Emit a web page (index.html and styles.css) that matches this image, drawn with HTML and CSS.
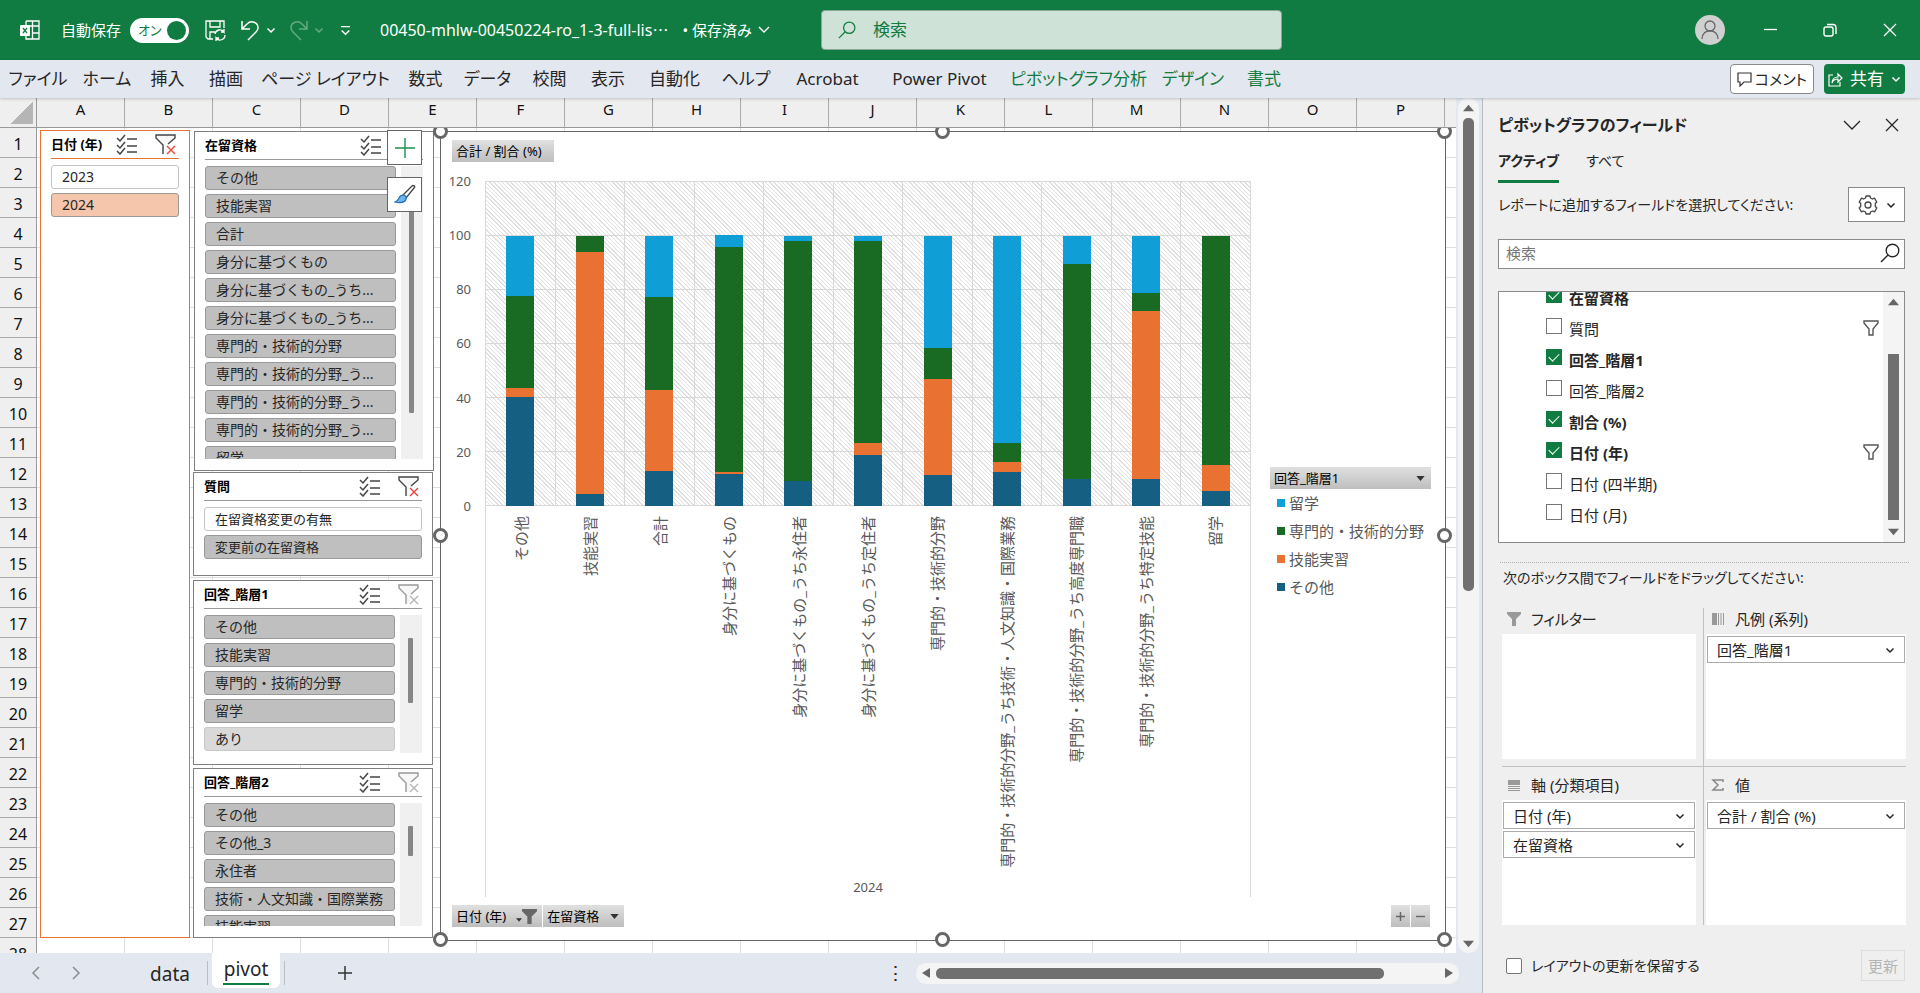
FILE: index.html
```html
<!DOCTYPE html>
<html lang="ja">
<head>
  <meta charset="UTF-8" />
  <meta name="viewport" content="width=device-width, initial-scale=1" />
  <title>00450-mhlw-00450224-ro_1-3-full-list - Excel</title>
  <link rel="stylesheet" href="styles.css">
</head>
<body>

  <svg class="sprite" aria-hidden="true">
    <symbol id="i-chev" viewBox="0 0 10 10"><path d="M1.500 3.500 5 7l3.500-3.500" fill="none" stroke="currentColor" stroke-width="1.500"/></symbol>
    <symbol id="i-chevwide" viewBox="0 0 18 18"><path d="M1 5l8 8 8-8" fill="none" stroke="currentColor" stroke-width="1.300"/></symbol>
    <symbol id="i-close" viewBox="0 0 14 14"><path d="M1 1l12 12M13 1 1 13" fill="none" stroke="currentColor" stroke-width="1.300"/></symbol>
    <symbol id="i-search" viewBox="0 0 20 20"><path d="M8 12 1 19" fill="none" stroke="currentColor" stroke-width="1.400"/><circle cx="12.500" cy="7.500" r="6.300" fill="none" stroke="currentColor" stroke-width="1.400"/></symbol>
    <symbol id="i-multi" viewBox="0 0 21 21"><path d="M1 4l3 3 5-6M1 11l3 3 5-6M1 17l3 3 5-6M11 5h10M11 12h10M11 18h10" fill="none" stroke="#444" stroke-width="1.500"/></symbol>
    <symbol id="i-clear" viewBox="0 0 21 21"><path d="M1 1h19v3l-8 7v9H8v-9L1 4z" fill="#f7f7f7" stroke="none"/><path d="M8 20v-9L1 4V1h19v3l-7 6" fill="none" stroke="currentColor" stroke-width="1.400"/><path d="M12 12l8 8M20 12l-8 8" stroke="var(--x, #e8443c)" stroke-width="1.400"/></symbol>
    <symbol id="i-funnel" viewBox="0 0 16 16"><path d="M1 1h14v2L10 9v6H6V9L1 3z" fill="none" stroke="#555" stroke-width="1.400"/></symbol>
    <symbol id="i-funnelfill" viewBox="0 0 14 14"><path d="M0 0h14v2L9 7v7H5V7L0 2z" fill="currentColor"/></symbol>
    <symbol id="i-tri" viewBox="0 0 10 6"><path d="M0 0h10L5 6z" fill="currentColor"/></symbol>
  </svg>

  <header class="titlebar">
    <svg class="app-icon" viewBox="0 0 20 20"><path d="M6 1h13v18H6V15M6 5V1M12.500 1v18M6 6h13M12 13h7" fill="none" stroke="#fff" stroke-width="1.300"/><rect x="0" y="5" width="10" height="11" rx="1" fill="#fff"/><path d="M3 8l4 5M7 8l-4 5" stroke="#107c41" stroke-width="1.300"/></svg>
    <span class="autosave" id="autosave">自動保存</span>
    <button class="toggle" aria-labelledby="autosave">オン<span class="knob"></span></button>
    <button class="tool save" aria-label="保存"><svg viewBox="0 0 21 21"><path d="M8 19H3L1 17V1h18v7M5 1v6h10V1M5 19v-7h5" fill="none" stroke="#fff" stroke-width="1.300"/><path d="M10 14a5 5 0 0 1 9-2v-3M19 12h-3M20 15a5 5 0 0 1-9 3v3M11 18h3" fill="none" stroke="#fff" stroke-width="1.300"/></svg></button>
    <button class="tool undo" aria-label="元に戻す"><svg viewBox="0 0 21 21"><path d="M2 1v8h8M2 9l5-5c4-4 11-2 11 4 0 2-1 3-2 4l-8 8" fill="none" stroke="#fff" stroke-width="1.500"/></svg><svg class="mini"><use href="#i-chev"/></svg></button>
    <button class="tool redo" aria-label="やり直し" disabled><svg viewBox="0 0 21 21"><path d="M19 1v8h-8M19 9l-5-5C10 0 3 2 3 8c0 2 1 3 2 4l8 8" fill="none" stroke="#fff" stroke-width="1.500"/></svg><svg class="mini"><use href="#i-chev"/></svg></button>
    <button class="tool more" aria-label="クイック アクセスのカスタマイズ"><svg viewBox="0 0 10 10"><path d="M1 1.500h8M1.500 5 5 8.500 8.500 5" fill="none" stroke="#fff" stroke-width="1.300"/></svg></button>
    <button class="doc">00450-mhlw-00450224-ro_1-3-full-lis⋯<span class="state">• 保存済み</span><svg viewBox="0 0 12 12"><path d="M1 3l5 5 5-5" fill="none" stroke="#fff" stroke-width="1.400"/></svg></button>
    <label class="search"><svg><use href="#i-search"/></svg><input type="text" aria-label="検索" placeholder="検索"></label>
    <div class="win">
      <button class="avatar" aria-label="アカウント"><svg viewBox="0 0 30 30"><circle cx="15" cy="15" r="15" fill="#d0d0d0"/><circle cx="15" cy="11" r="5" fill="none" stroke="#666" stroke-width="1.300"/><path d="M7 24c0-11 16-11 16 0" fill="none" stroke="#666" stroke-width="1.300"/></svg></button>
      <button aria-label="最小化"><svg viewBox="0 0 14 14"><path d="M1 6.500h13" stroke="#fff" stroke-width="1.300"/></svg></button>
      <button aria-label="元に戻す (縮小)"><svg viewBox="0 0 14 14"><rect x="1" y="4" width="9" height="9" rx="2" fill="none" stroke="#fff" stroke-width="1.400"/><path d="M4 1.500h6a3 3 0 0 1 3 3V11" fill="none" stroke="#fff" stroke-width="1.400"/></svg></button>
      <button aria-label="閉じる"><svg><use href="#i-close"/></svg></button>
    </div>
  </header>

  <div class="ribbon">
    <nav class="ribbon-tabs">
      <a href="#">ファイル</a>
      <a href="#">ホーム</a>
      <a href="#">挿入</a>
      <a href="#">描画</a>
      <a href="#">ページ レイアウト</a>
      <a href="#">数式</a>
      <a href="#">データ</a>
      <a href="#">校閲</a>
      <a href="#">表示</a>
      <a href="#">自動化</a>
      <a href="#">ヘルプ</a>
      <a href="#">Acrobat</a>
      <a href="#">Power Pivot</a>
      <a href="#" class="ctx">ピボットグラフ分析</a>
      <a href="#" class="ctx">デザイン</a>
      <a href="#" class="ctx">書式</a>
    </nav>
    <button class="btn-comment"><svg viewBox="0 0 15 15"><path d="M1 1h13v9H7l-4 4v-4H1z" fill="none" stroke="#333" stroke-width="1.200"/></svg>コメント</button>
    <button class="btn-share"><svg viewBox="0 0 15 15"><path d="M5 3H1v11h11v-4M4 11c0-4 3-6 6-6V2l4 4-4 4V7c-3 0-5 1-6 4z" fill="none" stroke="#fff" stroke-width="1.200"/></svg>共有<svg class="mini"><use href="#i-chev"/></svg></button>
  </div>

  <main class="workspace">
    <section class="book">
      <div class="sheet">
        <div class="corner"></div>
        <div class="cols"><span>A</span><span>B</span><span>C</span><span>D</span><span>E</span><span>F</span><span>G</span><span>H</span><span>I</span><span>J</span><span>K</span><span>L</span><span>M</span><span>N</span><span>O</span><span>P</span></div>
        <div class="rows"><span>1</span><span>2</span><span>3</span><span>4</span><span>5</span><span>6</span><span>7</span><span>8</span><span>9</span><span>10</span><span>11</span><span>12</span><span>13</span><span>14</span><span>15</span><span>16</span><span>17</span><span>18</span><span>19</span><span>20</span><span>21</span><span>22</span><span>23</span><span>24</span><span>25</span><span>26</span><span>27</span><span>28</span></div>

        <div class="cells">
          <!-- スライサー -->
          <div class="slicer s-date">
            <div class="slicer-head"><h3>日付 (年)</h3><svg><use href="#i-multi"/></svg><svg><use href="#i-clear"/></svg></div>
            <div class="slicer-body">
              <div class="items">
                <button class="off">2023</button>
                <button class="on">2024</button>
              </div>
            </div>
          </div>

          <div class="slicer s-status">
            <div class="slicer-head"><h3>在留資格</h3><svg><use href="#i-multi"/></svg><svg><use href="#i-clear"/></svg></div>
            <div class="slicer-body">
              <div class="items">
                <button>その他</button>
                <button>技能実習</button>
                <button>合計</button>
                <button>身分に基づくもの</button>
                <button>身分に基づくもの_うち...</button>
                <button>身分に基づくもの_うち...</button>
                <button>専門的・技術的分野</button>
                <button>専門的・技術的分野_う...</button>
                <button>専門的・技術的分野_う...</button>
                <button>専門的・技術的分野_う...</button>
                <button>留学</button>
              </div>
              <div class="track"><i></i></div>
            </div>
          </div>

          <div class="slicer s-question">
            <div class="slicer-head"><h3>質問</h3><svg><use href="#i-multi"/></svg><svg><use href="#i-clear"/></svg></div>
            <div class="slicer-body">
              <div class="items small">
                <button class="off">在留資格変更の有無</button>
                <button>変更前の在留資格</button>
              </div>
            </div>
          </div>

          <div class="slicer s-level1">
            <div class="slicer-head"><h3>回答_階層1</h3><svg><use href="#i-multi"/></svg><svg class="dim"><use href="#i-clear"/></svg></div>
            <div class="slicer-body">
              <div class="items">
                <button>その他</button>
                <button>技能実習</button>
                <button>専門的・技術的分野</button>
                <button>留学</button>
                <button class="nodata">あり</button>
              </div>
              <div class="track"><i></i></div>
            </div>
          </div>

          <div class="slicer s-level2">
            <div class="slicer-head"><h3>回答_階層2</h3><svg><use href="#i-multi"/></svg><svg class="dim"><use href="#i-clear"/></svg></div>
            <div class="slicer-body">
              <div class="items">
                <button>その他</button>
                <button>その他_3</button>
                <button>永住者</button>
                <button>技術・人文知識・国際業務</button>
                <button>技能実習</button>
              </div>
              <div class="track"><i></i></div>
            </div>
          </div>

          <!-- ピボットグラフ -->
          <div class="chart">
            <div class="chart-top"><button class="fbtn">合計 / 割合 (%)</button></div>
            <div class="yaxis"><span>120</span><span>100</span><span>80</span><span>60</span><span>40</span><span>20</span><span>0</span></div>
            <div class="plot">
              <div class="bar"><i class="b1" style="height:33.8%"></i><i class="b2" style="height:2.6%"></i><i class="b3" style="height:28.3%"></i><i class="b4" style="height:18.6%"></i></div>
              <div class="bar"><i class="b1" style="height:3.8%"></i><i class="b2" style="height:74.5%"></i><i class="b3" style="height:5%"></i></div>
              <div class="bar"><i class="b1" style="height:10.8%"></i><i class="b2" style="height:25%"></i><i class="b3" style="height:28.6%"></i><i class="b4" style="height:18.9%"></i></div>
              <div class="bar"><i class="b1" style="height:10%"></i><i class="b2" style="height:0.6%"></i><i class="b3" style="height:69.2%"></i><i class="b4" style="height:3.7%"></i></div>
              <div class="bar"><i class="b1" style="height:7.8%"></i><i class="b3" style="height:74.1%"></i><i class="b4" style="height:1.4%"></i></div>
              <div class="bar"><i class="b1" style="height:15.8%"></i><i class="b2" style="height:3.7%"></i><i class="b3" style="height:62.4%"></i><i class="b4" style="height:1.4%"></i></div>
              <div class="bar"><i class="b1" style="height:9.7%"></i><i class="b2" style="height:29.5%"></i><i class="b3" style="height:9.6%"></i><i class="b4" style="height:34.5%"></i></div>
              <div class="bar"><i class="b1" style="height:10.6%"></i><i class="b2" style="height:3.1%"></i><i class="b3" style="height:5.8%"></i><i class="b4" style="height:63.8%"></i></div>
              <div class="bar"><i class="b1" style="height:8.4%"></i><i class="b3" style="height:66.2%"></i><i class="b4" style="height:8.7%"></i></div>
              <div class="bar"><i class="b1" style="height:8.4%"></i><i class="b2" style="height:51.7%"></i><i class="b3" style="height:5.8%"></i><i class="b4" style="height:17.6%"></i></div>
              <div class="bar"><i class="b1" style="height:4.7%"></i><i class="b2" style="height:8%"></i><i class="b3" style="height:70.6%"></i></div>
            </div>
            <div class="legend">
              <button class="fbtn">回答_階層1<svg class="tri"><use href="#i-tri"/></svg></button>
              <ul>
                <li><i class="b4"></i>留学</li>
                <li><i class="b3"></i>専門的・技術的分野</li>
                <li><i class="b2"></i>技能実習</li>
                <li><i class="b1"></i>その他</li>
              </ul>
            </div>
            <div class="xaxis">
              <div class="cats">
                <div><span>その他</span></div>
                <div><span>技能実習</span></div>
                <div><span>合計</span></div>
                <div><span>身分に基づくもの</span></div>
                <div><span>身分に基づくもの_うち永住者</span></div>
                <div><span>身分に基づくもの_うち定住者</span></div>
                <div><span>専門的・技術的分野</span></div>
                <div><span>専門的・技術的分野_うち技術・人文知識・国際業務</span></div>
                <div><span>専門的・技術的分野_うち高度専門職</span></div>
                <div><span>専門的・技術的分野_うち特定技能</span></div>
                <div><span>留学</span></div>
              </div>
              <div class="year">2024</div>
            </div>
            <div class="chart-foot">
              <button class="fbtn filtered">日付 (年)<svg class="tri"><use href="#i-tri"/></svg><svg class="fn"><use href="#i-funnelfill"/></svg></button>
              <button class="fbtn">在留資格<svg class="tri"><use href="#i-tri"/></svg></button>
              <span class="grow"></span>
              <button class="fbtn sq" aria-label="フィールド全体の展開"><svg viewBox="0 0 10 10"><path d="M5 0v10M0 5h10" stroke="#666" stroke-width="1.600"/></svg></button>
              <button class="fbtn sq" aria-label="フィールド全体の折りたたみ"><svg viewBox="0 0 10 10"><path d="M0 5h10" stroke="#666" stroke-width="1.600"/></svg></button>
            </div>
            <b class="h tl"></b><b class="h tc"></b><b class="h tr"></b><b class="h ml"></b><b class="h mr"></b><b class="h bl"></b><b class="h bc"></b><b class="h br"></b>
          </div>

          <div class="chart-tools">
            <button aria-label="グラフ要素"><svg viewBox="0 0 22 22"><path d="M11 1v20M1 11h20" stroke="#1d9150" stroke-width="1.400"/></svg></button>
            <button aria-label="グラフ スタイル"><svg viewBox="0 0 22 22"><path d="M9 11 18 2c1-1 4 0 2 2l-8 10z" fill="#fff" stroke="#444" stroke-width="1.300"/><path d="M9 11c2 0 4 2 3 4-1 4-6 4-11 3 3-1 3-2 4-4s2-3 4-3z" fill="#6cb4ea" stroke="#1c6fb8" stroke-width="1.200"/></svg></button>
          </div>
        </div>
      </div>

      <div class="vscroll"><svg class="up"><use href="#i-tri"/></svg><i></i><svg><use href="#i-tri"/></svg></div>

      <footer class="sheetbar">
        <button class="nav" aria-label="前のシート"><svg viewBox="0 0 10 14"><path d="M8 1 2 7l6 6" fill="none" stroke="#8a8d93" stroke-width="1.500"/></svg></button>
        <button class="nav" aria-label="次のシート"><svg viewBox="0 0 10 14"><path d="M2 1l6 6-6 6" fill="none" stroke="#8a8d93" stroke-width="1.500"/></svg></button>
        <a href="#" class="stab">data</a>
        <a href="#" class="stab active">pivot</a>
        <button class="add" aria-label="新しいシート"><svg viewBox="0 0 16 16"><path d="M8 1v14M1 8h14" stroke="#333" stroke-width="1.500"/></svg></button>
        <span class="grow"></span>
        <span class="dots">⋮</span>
        <div class="hscroll"><svg class="left" viewBox="0 0 8 10"><path d="M8 0v10L0 5z" fill="#666"/></svg><i></i><svg viewBox="0 0 8 10"><path d="M0 0v10l8-5z" fill="#666"/></svg></div>
      </footer>
    </section>

    <aside class="pane">
      <div class="pane-title">
        <h2>ピボットグラフのフィールド</h2>
        <button aria-label="作業ウィンドウ オプション"><svg class="wide"><use href="#i-chevwide"/></svg></button>
        <button aria-label="閉じる"><svg><use href="#i-close"/></svg></button>
      </div>
      <div class="pane-tabs"><a href="#" class="active">アクティブ</a><a href="#">すべて</a></div>
      <div class="pane-choose">
        <p>レポートに追加するフィールドを選択してください:</p>
        <button aria-label="ツール"><svg class="gear" viewBox="0 0 20 20"><path d="M7.500 3 8 1h4l.500 2 2 1 2-.800 2.300 3.800-1.500 1.500v3l1.500 1.500-2.300 3.800-2-.800-2 1L12 19H8l-.500-2-2-1-2 .800L1.200 13l1.500-1.500v-3L1.200 7l2.300-3.800 2 .800z" fill="none" stroke="#444" stroke-width="1.300" stroke-linejoin="round"/><circle cx="10" cy="10" r="3" fill="none" stroke="#444" stroke-width="1.300"/></svg><svg class="mini"><use href="#i-chev"/></svg></button>
      </div>
      <label class="pane-search"><input type="text" aria-label="フィールドの検索" placeholder="検索"><svg><use href="#i-search"/></svg></label>

      <div class="fields">
        <div class="field-list">
          <label><input type="checkbox" checked><span>在留資格</span></label>
          <label><input type="checkbox"><span>質問</span><svg><use href="#i-funnel"/></svg></label>
          <label><input type="checkbox" checked><span>回答_階層1</span></label>
          <label><input type="checkbox"><span>回答_階層2</span></label>
          <label><input type="checkbox" checked><span>割合 (%)</span></label>
          <label><input type="checkbox" checked><span>日付 (年)</span><svg><use href="#i-funnel"/></svg></label>
          <label><input type="checkbox"><span>日付 (四半期)</span></label>
          <label><input type="checkbox"><span>日付 (月)</span></label>
        </div>
        <div class="fscroll"><svg class="up"><use href="#i-tri"/></svg><i></i><svg><use href="#i-tri"/></svg></div>
      </div>

      <p class="drag">次のボックス間でフィールドをドラッグしてください:</p>
      <div class="zones">
        <div class="zone">
          <h4><svg viewBox="0 0 14 14" color="#999"><use href="#i-funnelfill"/></svg>フィルター</h4>
          <div class="box"></div>
        </div>
        <div class="zone right">
          <h4><svg viewBox="0 0 14 14"><path d="M1 1h5v12H1z" fill="#999"/><path d="M7.500 1v12M10 1v12M12.500 1v12" stroke="#999"/></svg>凡例 (系列)</h4>
          <div class="box"><button>回答_階層1<svg><use href="#i-chev"/></svg></button></div>
        </div>
        <div class="zone">
          <h4><svg viewBox="0 0 14 14"><path d="M1 2h12v5H1z" fill="#999"/><path d="M1 8.500h12M1 10.500h12M1 12.500h12" stroke="#999"/></svg>軸 (分類項目)</h4>
          <div class="box"><button>日付 (年)<svg><use href="#i-chev"/></svg></button><button>在留資格<svg><use href="#i-chev"/></svg></button></div>
        </div>
        <div class="zone right">
          <h4><svg viewBox="0 0 14 14"><path d="M12 4V2H2l5 5-5 5h10v-2" fill="none" stroke="#888" stroke-width="1.500"/></svg>値</h4>
          <div class="box"><button>合計 / 割合 (%)<svg><use href="#i-chev"/></svg></button></div>
        </div>
      </div>
      <div class="defer">
        <label><input type="checkbox"><span>レイアウトの更新を保留する</span></label>
        <button disabled>更新</button>
      </div>
    </aside>
  </main>

</body>
</html>
```

FILE: styles.css
```css
* {
  box-sizing: border-box;
}
body {
  margin: 0;
  height: 100vh;
  display: flex;
  flex-direction: column;
  overflow: hidden;
  font-family: "Noto Sans", "Noto Sans CJK JP", sans-serif;
  font-size: 15px;
  line-height: 20px;
  color: #262626;
  background: #e3e7ef;
}
button, input {
  font: inherit;
  color: inherit;
  margin: 0;
}
button {
  padding: 0;
  border: none;
  background: none;
}
a {
  color: inherit;
  text-decoration: none;
}
h2, h3, h4, p, ul {
  margin: 0;
  padding: 0;
}
svg {
  display: block;
  flex: none;
}
.sprite {
  position: absolute;
  width: 0;
  height: 0;
}
.mini {
  width: 10px;
  height: 10px;
}
.grow {
  flex: 1;
}

/* タイトル バー */
.titlebar {
  flex: none;
  display: flex;
  align-items: center;
  height: 60px;
  padding-left: 20px;
  background: #107c41;
  color: #fff;
}
.app-icon {
  width: 20px;
  height: 20px;
}
.autosave {
  margin-left: 21px;
}
.toggle {
  display: flex;
  align-items: center;
  justify-content: space-between;
  width: 59px;
  height: 25px;
  margin: 0 16px 0 9px;
  padding: 0 3px 0 8px;
  border-radius: 13px;
  background: #fff;
  color: #107c41;
  font-size: 13px;
  font-feature-settings: "palt";
}
.knob {
  width: 19px;
  height: 19px;
  border-radius: 50%;
  background: #107c41;
}
.tool {
  display: flex;
  align-items: center;
  gap: 5px;
}
.tool svg:first-child {
  width: 21px;
  height: 21px;
}
.tool.undo {
  margin-left: 14px;
}
.tool.redo {
  margin-left: 12px;
  color: #fff;
  opacity: 0.35;
}
.tool.more {
  margin-left: 16px;
}
.tool.more svg {
  width: 11px;
  height: 11px;
}
.doc {
  display: flex;
  align-items: center;
  margin-left: 29px;
  font-size: 16px;
  white-space: nowrap;
}
.doc .state {
  margin: 0 6px 0 14px;
  font-size: 15px;
}
.doc svg {
  width: 12px;
  height: 12px;
}
.search {
  position: absolute;
  left: 50%;
  display: flex;
  align-items: center;
  gap: 15px;
  width: 24%;
  height: 40px;
  margin-left: -139px;
  padding-left: 16px;
  border: 1px solid #86a894;
  border-radius: 4px;
  background: #cee2d7;
  color: #107c41;
}
.search svg {
  width: 18px;
  height: 18px;
}
.search input {
  flex: 1;
  min-width: 0;
  border: none;
  background: none;
  font-size: 17px;
  outline: none;
}
.search input::placeholder {
  color: #107c41;
}
.win {
  display: flex;
  margin-left: auto;
}
.win button {
  display: flex;
  justify-content: center;
  align-items: center;
  width: 60px;
  height: 60px;
}
.win svg {
  width: 14px;
  height: 14px;
}
.win .avatar svg {
  width: 30px;
  height: 30px;
}

/* リボン */
.ribbon {
  position: relative;
  z-index: 5;
  flex: none;
  display: flex;
  align-items: center;
  height: 38px;
  padding-right: 15px;
  background: #e3e7ef;
  box-shadow: 0 1px 3px rgba(0, 0, 0, 0.2);
  font-size: 17px;
  font-feature-settings: "palt";
}
.ribbon-tabs {
  display: grid;
  grid-template-columns: 76px 62px 59px 58px 141px 59px 65px 59px 58px 75px 68px 95px 129px 149px 80px 62px;
  margin-right: auto;
  text-align: center;
  white-space: nowrap;
}
.ribbon-tabs .ctx {
  color: #107c41;
}
.btn-comment, .btn-share {
  display: flex;
  align-items: center;
  justify-content: center;
  gap: 3px;
  height: 30px;
  border-radius: 4px;
  white-space: nowrap;
}
.btn-comment {
  width: 84px;
  margin-right: 10px;
  border: 1px solid #8a8a8a;
  background: #fff;
  font-size: 15px;
}
.btn-share {
  width: 81px;
  gap: 7px;
  background: #107c41;
  color: #fff;
}
.btn-comment svg, .btn-share svg:first-child {
  width: 15px;
  height: 15px;
}

/* ブック */
.workspace {
  flex: 1;
  min-height: 0;
  display: grid;
  grid-template-columns: 1fr 437px;
}
.book {
  min-width: 0;
  min-height: 0;
  display: grid;
  grid-template-columns: 1fr 26px;
  grid-template-rows: minmax(0, 1fr) 40px;
  border-right: 1px solid #b9bdc4;
}
.sheet {
  min-width: 0;
  display: grid;
  grid-template-columns: 37px 1fr;
  grid-template-rows: 30px 1fr;
  overflow: hidden;
  background: #fff;
}
.corner {
  border-right: 1px solid #999;
  border-bottom: 1px solid #999;
  background: linear-gradient(135deg, transparent 50%, #b5b5b5 50%) 11px 4px / 22px 22px no-repeat #efefef;
}
.cols, .rows {
  display: flex;
  overflow: hidden;
  background: #efefef;
  color: #111;
}
.cols {
  border-bottom: 1px solid #999;
}
.cols span {
  flex: none;
  width: 88px;
  border-right: 1px solid #ababab;
  line-height: 22px;
  text-align: center;
}
.rows {
  flex-direction: column;
  border-right: 1px solid #999;
  font-size: 16px;
}
.rows span {
  flex: none;
  height: 30px;
  border-bottom: 1px solid #ababab;
  line-height: 32px;
  text-align: center;
}
.cells {
  position: relative;
  overflow: hidden;
  background-image: linear-gradient(to left, #dedede 1px, transparent 1px), linear-gradient(to top, #dedede 1px, transparent 1px);
  background-size: 88px 30px;
}

/* スライサー */
.slicer {
  position: absolute;
  left: 156px;
  width: 240px;
  display: flex;
  flex-direction: column;
  padding: 0 10px 11px;
  border: 1px solid #808080;
  background: #fff;
}
.s-date {
  left: 3px;
  top: 2px;
  width: 150px;
  height: 808px;
  border-color: #e97132;
}
.s-status {
  left: 157px;
  top: 3px;
  height: 340px;
}
.s-question {
  top: 344px;
  height: 104px;
}
.s-level1 {
  top: 452px;
  height: 185px;
}
.s-level2 {
  top: 640px;
  height: 170px;
}
.slicer-head {
  flex: none;
  display: flex;
  align-items: center;
  height: 28px;
  padding-right: 3px;
  border-bottom: 1px solid #999;
}
.s-date .slicer-head {
  border-color: #e97132;
}
.slicer-head h3 {
  flex: 1;
  padding-bottom: 2px;
  font-size: 13px;
  color: #000;
  white-space: nowrap;
}
.slicer-head svg {
  width: 21px;
  height: 21px;
  color: #444;
}
.slicer-head svg:last-child {
  margin-left: 18px;
}
.slicer-head .dim {
  --x: #b5b5b5;
  color: #999;
}
.slicer-body {
  flex: 1;
  min-height: 0;
  display: flex;
  gap: 5px;
  margin-top: 6px;
}
.items {
  flex: 1;
  display: flex;
  flex-direction: column;
  gap: 4px;
  overflow: hidden;
}
.items button {
  flex: none;
  height: 24px;
  padding: 0 10px;
  border: 1px solid #999;
  border-radius: 3px;
  background: #bfbfbf;
  font-size: 14px;
  line-height: 20px;
  text-align: left;
  white-space: nowrap;
}
.items.small button {
  font-size: 13px;
}
.items .off {
  border-color: #c4c4c4;
  background: #fff;
}
.items .on {
  background: #f6c6ac;
}
.items .nodata {
  border-color: #c8c8c8;
  background: #d9d9d9;
}
.track {
  flex: none;
  width: 22px;
  padding-left: 8px;
  background: #f0f0f0;
}
.track i {
  display: block;
  width: 5px;
  border-radius: 1px;
  background: #868686;
}
.s-status .track i {
  height: 218px;
  margin-top: 29px;
}
.s-level1 .track i {
  height: 65px;
  margin-top: 23px;
}
.s-level2 .track i {
  height: 30px;
  margin-top: 23px;
}

/* グラフ */
.chart {
  position: absolute;
  left: 403px;
  top: 3px;
  width: 1006px;
  height: 810px;
  display: grid;
  grid-template-columns: 44px 1fr 194px;
  grid-template-rows: 49px 325px 391px 1fr;
  border: 1px solid #666;
  background: #fff;
  color: #595959;
}
.chart-top, .chart-foot {
  grid-column: 1 / -1;
  display: flex;
  align-items: flex-start;
  gap: 1px;
  padding: 8px 15px 0 11px;
}
.fbtn {
  display: flex;
  align-items: center;
  height: 22px;
  padding: 0 5px 0 4px;
  background: linear-gradient(#e0e0e0, #bebebe);
  color: #000;
  font-size: 13px;
  white-space: nowrap;
}
.chart-top .fbtn {
  padding-right: 12px;
}
.tri {
  width: 9px;
  height: 5px;
  margin-left: 11px;
  color: #333;
}
.filtered .tri {
  width: 6px;
  height: 4px;
  margin: 8px 0 0 10px;
}
.fn {
  width: 15px;
  height: 15px;
  color: #666;
}
.sq {
  justify-content: center;
  width: 19px;
  padding: 0;
}
.sq svg {
  width: 9px;
  height: 9px;
}
.yaxis {
  display: flex;
  flex-direction: column;
  justify-content: space-between;
  margin: -10px 14px -10px 0;
  font-size: 13px;
  text-align: right;
}
.plot {
  display: grid;
  grid-template-columns: repeat(11, 1fr);
  border-left: 1px solid #d9d9d9;
  border-top: 1px solid #d9d9d9;
  background:
    linear-gradient(to top, #d9d9d9 1px, transparent 1px) 0 0 / 100% calc(100% / 6),
    repeating-linear-gradient(45deg, #e0e0e0 0 1px, #fff 1px 3px);
}
.bar {
  display: flex;
  flex-direction: column-reverse;
  border-right: 1px solid #d9d9d9;
}
.bar i {
  width: 28px;
  margin: 0 auto;
}
.b1 {
  background: #156082;
}
.b2 {
  background: #e97132;
}
.b3 {
  background: #196b24;
}
.b4 {
  background: #0f9ed5;
}
.legend {
  grid-row: 2 / 4;
  grid-column: 3;
  margin: 286px 14px 0 19px;
}
.legend .fbtn {
  width: 100%;
}
.legend .tri {
  margin: 0 1px 0 auto;
}
.legend ul {
  list-style: none;
}
.legend li {
  display: flex;
  align-items: center;
  gap: 4px;
  height: 28px;
  padding-left: 7px;
  white-space: nowrap;
}
.legend li i {
  width: 8px;
  height: 8px;
}
.xaxis {
  grid-column: 2;
  display: flex;
  flex-direction: column;
  justify-content: space-between;
  border: solid #d9d9d9;
  border-width: 0 1px;
}
.cats {
  display: grid;
  grid-template-columns: repeat(11, 1fr);
  padding-top: 10px;
}
.cats div {
  display: flex;
  justify-content: center;
  align-items: flex-start;
}
.cats span {
  writing-mode: vertical-rl;
  text-orientation: sideways;
  transform: rotate(180deg);
  white-space: nowrap;
}
.year {
  font-size: 13px;
  text-align: center;
}
.h {
  position: absolute;
  width: 15px;
  height: 15px;
  margin: -8px;
  border: 3px solid #666;
  border-radius: 50%;
  background: #fff;
}
.tl, .tc, .tr {
  top: 0;
}
.bl, .bc, .br {
  top: 100%;
}
.ml, .mr {
  top: 50%;
}
.tl, .ml, .bl {
  left: 0;
}
.tc, .bc {
  left: 50%;
}
.tr, .mr, .br {
  left: 100%;
}
.chart-tools {
  position: absolute;
  left: 350px;
  top: 2px;
  display: flex;
  flex-direction: column;
  gap: 12px;
}
.chart-tools button {
  display: flex;
  align-items: center;
  justify-content: center;
  width: 35px;
  height: 35px;
  border: 1px solid #666;
  background: #fff;
}
.chart-tools svg {
  width: 22px;
  height: 22px;
}

/* スクロール バーとシート見出し */
.vscroll {
  display: flex;
  flex-direction: column;
  align-items: center;
  gap: 6px;
  margin: 0 3px 0 2px;
  padding: 6px 0 5px;
  border-radius: 10px;
  background: #f4f4f4;
  color: #666;
}
.vscroll svg, .fscroll svg {
  width: 11px;
  height: 8px;
}
.up {
  transform: rotate(180deg);
}
.vscroll i {
  width: 11px;
  height: 56%;
  margin-bottom: auto;
  border-radius: 5px;
  background: #707070;
}
.sheetbar {
  grid-column: 1 / -1;
  display: flex;
  align-items: center;
  padding: 0 23px 0 31px;
  font-size: 19px;
}
.nav {
  width: 10px;
  margin-right: 30px;
}
.nav svg {
  width: 10px;
  height: 14px;
}
.stab {
  width: 95px;
  padding: 0;
  line-height: 38px;
  text-align: center;
}
.stab:not(.active) {
  height: 24px;
  margin: 0 4px 0 2px;
  border-right: 1px solid #b9bdc4;
  padding-left: 20px;
  line-height: 26px;
}
.stab.active {
  align-self: flex-start;
  width: 68px;
  height: 35px;
  border-radius: 0 0 6px 6px;
  background: linear-gradient(#107c41, #107c41) 50% 30px / 46px 2px no-repeat #fff;
  line-height: 32px;
}
.add {
  height: 24px;
  margin-left: 4px;
  padding-left: 52px;
  border-left: 1px solid #b9bdc4;
}
.add svg {
  width: 16px;
  height: 16px;
}
.dots {
  width: 30px;
}
.hscroll {
  display: flex;
  align-items: center;
  gap: 6px;
  width: 38%;
  height: 21px;
  padding: 0 6px;
  border-radius: 10px;
  background: #f4f4f4;
}
.hscroll svg {
  width: 8px;
  height: 10px;
}
.hscroll i {
  width: 448px;
  height: 11px;
  margin-right: auto;
  border-radius: 5px;
  background: #707070;
}

/* フィールド リスト */
.pane {
  min-width: 0;
  display: flex;
  flex-direction: column;
  padding: 12px 15px 0;
  background: #efefef;
  font-feature-settings: "palt";
}
.pane-title {
  display: flex;
  align-items: center;
  gap: 24px;
  height: 30px;
  padding-right: 6px;
}
.pane-title h2 {
  flex: 1;
  font-size: 16px;
}
.pane-title svg {
  width: 14px;
  height: 14px;
}
.pane-title .wide {
  width: 18px;
  height: 18px;
}
.pane-tabs {
  display: flex;
  gap: 27px;
  margin-top: 8px;
  font-size: 14px;
}
.pane-tabs a {
  padding: 3px 0 0;
  line-height: 20px;
}
.pane-tabs .active {
  height: 35px;
  border-bottom: 3px solid #107c41;
  font-weight: bold;
}
.pane-choose {
  display: flex;
  align-items: center;
  justify-content: space-between;
  margin-top: 4px;
  font-size: 14px;
}
.pane-choose button {
  display: flex;
  align-items: center;
  justify-content: center;
  gap: 8px;
  width: 57px;
  height: 35px;
  border: 1px solid #8a8a8a;
  background: #fff;
}
.gear {
  width: 20px;
  height: 20px;
}
.pane-search {
  display: flex;
  align-items: center;
  height: 30px;
  margin-top: 17px;
  padding: 0 4px 2px 7px;
  border: 1px solid #8a8a8a;
  background: #fff;
}
.pane-search input {
  flex: 1;
  min-width: 0;
  border: none;
  padding: 0;
  outline: none;
}
.pane-search svg {
  width: 20px;
  height: 20px;
}
.pane-search input::placeholder {
  color: #767676;
}
.fields {
  display: flex;
  height: 252px;
  margin-top: 22px;
  border: 1px solid #8a8a8a;
  background: #fff;
}
.field-list {
  flex: 1;
  display: flex;
  flex-direction: column;
  justify-content: flex-end;
  overflow: hidden;
  padding: 0 4px 7px 47px;
}
.field-list label {
  flex: none;
  display: flex;
  align-items: flex-start;
  height: 31px;
}
.field-list span {
  flex: 1;
  padding-left: 7px;
  line-height: 22px;
}
.field-list :checked + span {
  font-weight: bold;
}
.field-list svg {
  width: 16px;
  height: 16px;
  margin-top: 2px;
}
input[type="checkbox"] {
  appearance: none;
  flex: none;
  width: 16px;
  height: 16px;
  border: 1px solid #767676;
  background: #fff;
}
input[type="checkbox"]:checked {
  border-color: #107c41;
  background: #107c41;
}
input[type="checkbox"]:checked::after {
  content: "";
  display: block;
  width: 9px;
  height: 5px;
  margin: 3px 2px;
  border: solid #fff;
  border-width: 0 0 1px 1px;
  transform: rotate(-45deg);
}
.fscroll {
  display: flex;
  flex-direction: column;
  align-items: center;
  justify-content: space-between;
  width: 21px;
  padding: 6px 0;
  background: #f4f4f4;
  color: #666;
}
.fscroll i {
  width: 11px;
  height: 166px;
  margin: auto 0 8px;
  background: #707070;
}
.drag {
  margin: 19px -4px 0 2px;
  padding: 5px 3px 0;
  border-top: 1px dotted #b0b0b0;
  font-size: 14px;
}
.zones {
  display: grid;
  grid-template-columns: 202px 1fr;
  margin: 20px -1px 0 4px;
}
.zone {
  padding-right: 7px;
  border-right: 1px solid #c0c0c0;
}
.zone.right {
  padding: 0 0 0 2px;
  border-right: none;
}
.zone:nth-child(-n+2) {
  padding-bottom: 7px;
  border-bottom: 1px solid #c0c0c0;
}
.zone h4 {
  display: flex;
  align-items: center;
  gap: 10px;
  height: 26px;
  padding: 0 0 4px 5px;
  font-weight: normal;
}
.zone:nth-child(n+3) h4 {
  height: 33px;
  padding: 2px 0 0 5px;
}
.zone h4 svg {
  width: 14px;
  height: 14px;
}
.box {
  display: flex;
  flex-direction: column;
  gap: 2px;
  height: 125px;
  padding: 2px 1px;
  background: #fff;
}
.box button {
  display: flex;
  align-items: center;
  justify-content: space-between;
  height: 27px;
  padding: 0 9px;
  border: 1px solid #ababab;
}
.box button svg {
  width: 10px;
  height: 10px;
}
.defer {
  display: flex;
  align-items: center;
  justify-content: space-between;
  margin-top: 25px;
  padding-left: 8px;
}
.defer label {
  display: flex;
  align-items: center;
  gap: 9px;
  font-size: 14px;
}
.defer input[type="checkbox"] {
  border-radius: 2px;
}
.defer button {
  width: 44px;
  height: 31px;
  border: 1px solid #dcdcdc;
  color: #b5b5b5;
}
```
